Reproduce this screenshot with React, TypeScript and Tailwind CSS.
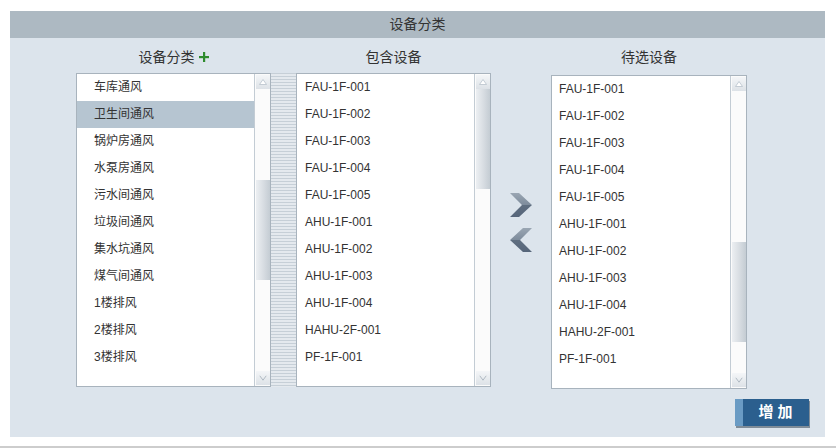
import React from 'react';

const font = { fontFamily: '"Liberation Sans", "Noto Sans CJK SC", sans-serif' };

const categories = ['车库通风', '卫生间通风', '锅炉房通风', '水泵房通风', '污水间通风', '垃圾间通风', '集水坑通风', '煤气间通风', '1楼排风', '2楼排风', '3楼排风'];
const devices = ['FAU-1F-001', 'FAU-1F-002', 'FAU-1F-003', 'FAU-1F-004', 'FAU-1F-005', 'AHU-1F-001', 'AHU-1F-002', 'AHU-1F-003', 'AHU-1F-004', 'HAHU-2F-001', 'PF-1F-001'];

function ScrollBar({ thumbTop }: { thumbTop: number }) {
  return (
    <div className="w-[16px] shrink-0 border-l border-[#c3ccd4] bg-[#fbfbfb] flex flex-col p-px">
      <div className="h-[14px] w-[14px] bg-gradient-to-b from-[#f4f6f8] to-[#dde2e7] flex items-center justify-center text-[7px] leading-none text-white">
        <svg width="8" height="6" viewBox="0 0 8 6"><polygon points="4,0.5 7.5,5.5 0.5,5.5" fill="#ffffff" stroke="#b8c2cb" strokeWidth="0.8" /></svg>
      </div>
      <div style={{ height: thumbTop }} />
      <div className="h-[100px] w-[14px] bg-gradient-to-r from-[#eceff2] via-[#d9dee3] to-[#c4ccd3]" />
      <div className="flex-1" />
      <div className="h-[14px] w-[14px] bg-gradient-to-b from-[#f4f6f8] to-[#dde2e7] flex items-center justify-center">
        <svg width="8" height="6" viewBox="0 0 8 6"><polyline points="0.8,0.8 4,5.2 7.2,0.8" fill="none" stroke="#aab4be" strokeWidth="0.9" /></svg>
      </div>
    </div>
  );
}

function ListBox({ items, selected, pad, thumbTop, className }: { items: string[]; selected?: number; pad: string; thumbTop: number; className: string }) {
  return (
    <div className={`bg-white border border-[#a8b3bd] flex ${className}`}>
      <div className="flex-1 overflow-hidden">
        {items.map((it, i) => (
          <div
            key={it}
            className={`h-[27px] leading-[26px] text-[12px] text-[#333] ${pad} ${i === selected ? 'bg-[#b6c5d1]' : ''}`}
          >
            {it}
          </div>
        ))}
      </div>
      <ScrollBar thumbTop={thumbTop} />
    </div>
  );
}

function Chevron({ dir }: { dir: 'left' | 'right' }) {
  const pts = dir === 'right' ? '0,0 9,0 22,12 9,24 0,24 12,12' : '22,0 13,0 0,12 13,24 22,24 10,12';
  const id = `g-${dir}`;
  return (
    <svg width="23" height="24" viewBox="0 0 23 24">
      <defs>
        <linearGradient id={id} x1="0" y1="0" x2="0" y2="1">
          <stop offset="0" stopColor="#9aa6b3" />
          <stop offset="0.5" stopColor="#7d8b9b" />
          <stop offset="0.52" stopColor="#5f6e80" />
          <stop offset="1" stopColor="#56657a" />
        </linearGradient>
      </defs>
      <polygon points={pts} fill={`url(#${id})`} />
    </svg>
  );
}

export default function App() {
  return (
    <div className="w-[836px] h-[448px] bg-white pt-[11px]" style={font}>
      <div className="ml-[10px] w-[815px] bg-[#dce4ec]">
        <div className="h-[27px] bg-[#adb9c2] text-[14px] text-[#333] flex items-center justify-center">设备分类</div>
        <div className="flex pl-[66px] pt-[9px]">
          <div className="w-[195px] flex flex-col">
            <div className="h-[20px] mb-[6px] flex items-center justify-center gap-[4px] text-[14px] text-[#333]">
              <span>设备分类</span>
              <svg width="10" height="10" viewBox="0 0 10 10">
                <rect x="4" y="0" width="2.2" height="10" fill="#2e8b2e" />
                <rect x="0" y="4" width="10" height="2.2" fill="#2e8b2e" />
              </svg>
            </div>
            <ListBox items={categories} selected={1} pad="pl-[17px]" thumbTop={91} className="h-[314px]" />
          </div>
          <div className="w-[25px] mt-[26px] h-[314px] bg-[repeating-linear-gradient(to_bottom,#c6cfd7_0px,#c6cfd7_1px,#e4e9ee_1px,#e4e9ee_3px)]" />
          <div className="w-[195px] flex flex-col">
            <div className="h-[20px] mb-[6px] flex items-center justify-center text-[14px] text-[#333]">包含设备</div>
            <ListBox items={devices} pad="pl-[8px]" thumbTop={0} className="h-[314px]" />
          </div>
          <div className="w-[60px] flex flex-col items-center pt-[146px] gap-[11px] pl-[1px]">
            <Chevron dir="right" />
            <Chevron dir="left" />
          </div>
          <div className="w-[196px] flex flex-col">
            <div className="h-[20px] mb-[8px] flex items-center justify-center text-[14px] text-[#333]">待选设备</div>
            <ListBox items={devices} pad="pl-[7px]" thumbTop={151} className="h-[314px]" />
          </div>
        </div>
        <div className="flex justify-end pr-[16px] pt-[10px] pb-[11px]">
          <button className="h-[27px] w-[74px] flex bg-[#2b5f8e] shadow-[1px_2px_0_#7f8c98] text-white text-[15px] font-bold tracking-[4px]">
            <span className="w-[8px] h-full bg-[#6a9bc4]" />
            <span className="flex-1 flex items-center justify-center pl-[3px]">增加</span>
          </button>
        </div>
      </div>
      <div className="mt-[9px] h-[2px] bg-[#cdcdcd]" />
    </div>
  );
}
